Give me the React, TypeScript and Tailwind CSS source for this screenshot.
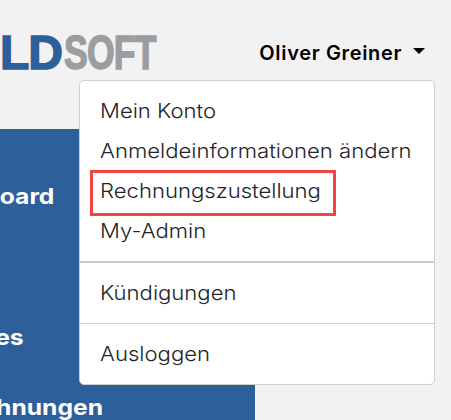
import { ReactNode } from "react";

const SIDE_ITEMS = [
  { label: "Dashboard", left: "ml-[-77px]", top: "mt-[53px]" },
  { label: "Services", left: "ml-[-82px]", top: "mt-[113px]" },
  { label: "Rechnungen", left: "ml-[-49px]", top: "mt-[42px]" },
];

function MenuItem({ children }: { children: ReactNode }) {
  return (
    <div className="h-10 pl-5 leading-10 text-[20px] font-[350] text-[#212529] whitespace-nowrap">
      <span className="inline-block origin-left scale-x-[1.105]">{children}</span>
    </div>
  );
}

function Logo() {
  return (
    <div className="font-['Liberation_Sans',sans-serif] font-bold text-[48px] leading-[36px] h-9 whitespace-nowrap flex tracking-[-1px] [-webkit-text-stroke:1.5px_currentColor]">
      <span className="text-[#2d5f9a] w-[64px] block">LD</span>
      <span className="text-[#9c9d9f] block origin-left scale-x-[0.74]">SOFT</span>
    </div>
  );
}

export default function App() {
  return (
    <div className="relative w-[451px] h-[420px] overflow-hidden bg-[#f2f2f2] font-['Inter',sans-serif]">
      {/* Header */}
      <div className="h-[129px] flex items-start justify-between pr-[26px] pt-[35px]">
        <Logo />
        <div className="flex items-center gap-[11px] mt-[6px] h-6">
          <span className="text-[20px] tracking-[0.65px] font-semibold text-black whitespace-nowrap">Oliver Greiner</span>
          <span className="border-t-[6px] border-x-[6px] border-t-black border-x-transparent mb-1" />
        </div>
      </div>

      {/* Sidebar */}
      <div className="w-[255px] h-[291px] bg-[#2d5f9a] overflow-hidden flex flex-col">
        {SIDE_ITEMS.map((item) => (
          <div
            key={item.label}
            className={`${item.left} ${item.top} origin-left scale-x-[1.12] text-[22px] leading-7 font-bold text-white whitespace-nowrap`}
          >
            {item.label}
          </div>
        ))}
      </div>

      {/* Dropdown */}
      <div className="absolute left-[79px] top-[80px] w-[356px] h-[305px] bg-white border border-[#cfcfcf] rounded-[5px] pt-[10px]">
        <MenuItem>Mein Konto</MenuItem>
        <MenuItem>Anmeldeinformationen ändern</MenuItem>
        <div className="relative">
          <MenuItem>Rechnungszustellung</MenuItem>
          <div className="absolute left-[10px] top-[-1px] w-[246px] h-[46px] border-[3px] border-[#f44545]" />
        </div>
        <MenuItem>My-Admin</MenuItem>
        <div className="h-[2px] bg-[#c8c8c8] mt-[10px]" />
        <div className="pt-[10px] pb-[10px]">
          <MenuItem>Kündigungen</MenuItem>
        </div>
        <div className="h-px bg-[#cccccc]" />
        <div className="pt-[10px]">
          <MenuItem>Ausloggen</MenuItem>
        </div>
      </div>
    </div>
  );
}
